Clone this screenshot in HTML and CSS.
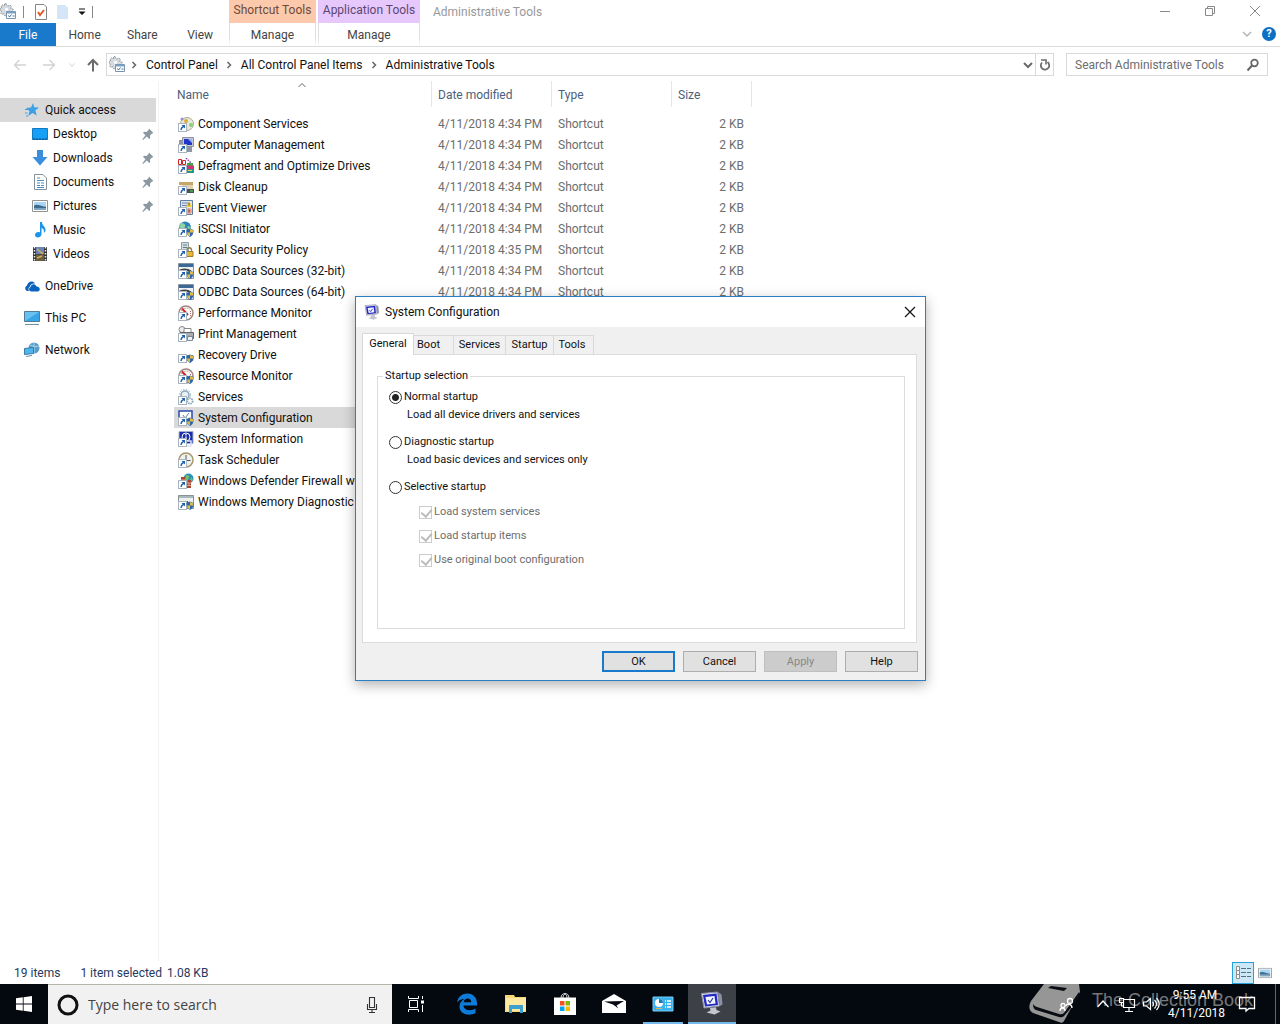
FILE: index.html
```html
<!DOCTYPE html>
<html lang="en">
<head>
<meta charset="utf-8">
<title>Administrative Tools</title>
<link rel="stylesheet" href="styles.css">
</head>
<body>
<svg class="defs" aria-hidden="true">
  <symbol id="link" viewBox="0 0 16 16"><rect x=".5" y="7.500" width="8" height="8" fill="#fff" stroke="#a9b4be"/><path d="M3.500 9H7v3.500l-1.200-1.200Q4 12 3.700 14H2.300Q2.500 11 4.700 10.200z" fill="#1f5fa8"/></symbol>
  <symbol id="shield" viewBox="0 0 16 16"><path d="M12 7.500 15.500 9c0 4-1 5.500-3.500 7-2.500-1.500-3.500-3-3.500-7z" fill="#2d66ae"/><path d="M12 8 15 9.300v2.200H12zM9 11.500h3v4c-2-1-2.700-2.500-3-4z" fill="#e3bd45"/></symbol>
  <symbol id="gear" viewBox="0 0 17 17"><path d="m6 .5.6 2 1.500.6L10 2l1.500 1.500-1 1.800L13 6v2.500H7V13l-2.500-.5-.5-2-2 1L.6 10l1-1.600L0 7.500V5.600l1.800-.5L1 3.200 2.500 2l1.700 1L4.700.5z" fill="#d5dbe0" stroke="#8b979f" stroke-dasharray="2 1"/><circle cx="6.500" cy="6.200" r="1.500" fill="#fff"/><path d="M6.500 8.500h9v7h-9z" fill="#fff" stroke="#7a93aa"/><path d="M6.500 9.500h9" stroke="#7aa2c4" stroke-width="2"/><path d="m8.500 12.500 1 1.500 2-2.500M12.500 13h2" stroke="#356d9c" fill="none"/></symbol>
  <symbol id="pin" viewBox="0 0 12 12"><path d="m7 .5 4.500 4.500-1.500.5-2 2 .2 2.500-1 1-2.400-2.400L1 12 .3 11.500 3.400 7.200 1 4.800l1-1 2.500.2 2-2z" fill="#8c98a1"/></symbol>
  <symbol id="monitor" viewBox="0 0 24 24"><path d="m1.500 2.500 16-1.500 2 14L4 17z" fill="#d9dce8" stroke="#8c91a8"/><path d="m3 4 13.500-1.500 1.500 11.500L5 15.500z" fill="#2328c4"/><path d="m5.500 6 9-1 1 7.500-8.500 1z" fill="#f2f5ff"/><path d="m8 9 2 2.500L13 7" stroke="#273a9a" fill="none" stroke-width="1.200"/><path d="m18 1 3.500 2.500 1 10-2.500 1.500z" fill="#8c91a8"/><path d="m10 17 6-.7.500 2.700 4 1.500-6 3-8-2 4-2z" fill="#c3c6cf"/></symbol>
  <symbol id="picture" viewBox="0 0 16 12"><path d="M.5.5h15v11H.5z" fill="#fff" stroke="#929292"/><path d="M2 2h12v4H2z" fill="#a9d6f5"/><path d="M2 5.500c4-2 6 1 12 1V8H2z" fill="#3c6d91"/><path d="M2 8h12v2H2z" fill="#7fa5c0"/></symbol>
  <symbol id="odbc" viewBox="0 0 16 16"><path d="M.5.500h15v15H.5z" fill="#eef1f4" stroke="#8391a0"/><path d="M1 1h14v3H1z" fill="#3d6795"/><path d="M2 7.500q6-2.500 11 1" fill="none" stroke="#444" stroke-width="2"/></symbol>
  <symbol id="gauge" viewBox="0 0 16 16"><circle cx="8" cy="8" r="7" fill="#fff" stroke="#9b8780" stroke-width="1.500"/><path d="M4 3.500 10 10" stroke="#d32020" stroke-width="2"/><path d="M3.500 6A5.500 5.500 0 0 1 12 4.500M12.500 6v5" fill="none" stroke="#b96565" stroke-dasharray="1 1"/></symbol>
</svg>

<main class="explorer">
  <header class="ribbon">
    <div class="ribbon-left">
      <div class="quick-bar">
        <svg class="i17" aria-hidden="true"><use href="#gear"/></svg>
        <span class="rule"></span>
        <svg class="i14" viewBox="0 0 14 16"><path d="M1.500.5H10l2.500 2.500v12.500h-11z" fill="#fff" stroke="#858585"/><path d="m4 8 2 3 4-5" fill="none" stroke="#e2592a" stroke-width="2"/></svg>
        <svg class="i14 folder" viewBox="0 0 14 16"><path d="M1 1h9v2h2v12H1z" fill="#d5e5f8"/></svg>
        <svg class="i8" viewBox="0 0 8 8"><path d="M1 .5h6v1H1zM.5 3.500h7L4 7z" fill="#111"/></svg>
        <span class="rule"></span>
      </div>
      <nav class="tabs">
        <button class="file">File</button><button>Home</button><button>Share</button><button>View</button>
      </nav>
    </div>
    <div class="context shortcut"><span>Shortcut Tools</span><button>Manage</button></div>
    <div class="context application"><span>Application Tools</span><button>Manage</button></div>
    <h1>Administrative Tools</h1>
    <div class="controls">
      <div class="window-buttons">
        <button aria-label="Minimize"><svg class="i12" viewBox="0 0 12 12"><path d="M1 6.500h10" stroke="#8a8a8a"/></svg></button>
        <button aria-label="Restore"><svg class="i12" viewBox="0 0 12 12"><path d="M1.500 3.500h7v7h-7zM3.500 3.500v-2h7v7h-2" fill="none" stroke="#8a8a8a"/></svg></button>
        <button aria-label="Close"><svg class="i12" viewBox="0 0 12 12"><path d="m1 1 10 10M11 1 1 11" stroke="#8a8a8a"/></svg></button>
      </div>
      <div class="help-row">
        <svg class="i12" viewBox="0 0 12 12"><path d="m2 4 4 4 4-4" fill="none" stroke="#b5b5b5" stroke-width="1.500"/></svg>
        <button class="help" aria-label="Help">?</button>
      </div>
    </div>
  </header>

  <div class="address-row">
    <div class="nav-buttons">
      <button aria-label="Back"><svg class="i14" viewBox="0 0 14 14"><path d="M13 7H1.500m5-5-5 5 5 5" fill="none" stroke="#d2d2d2" stroke-width="1.300"/></svg></button>
      <button aria-label="Forward"><svg class="i14" viewBox="0 0 14 14"><path d="M1 7h11.500m-5-5 5 5-5 5" fill="none" stroke="#d2d2d2" stroke-width="1.300"/></svg></button>
      <button class="recent" aria-label="Recent"><svg class="i8" viewBox="0 0 8 8"><path d="m1.500 2.500 2.500 3 2.500-3" fill="none" stroke="#d2d2d2"/></svg></button>
      <button class="up" aria-label="Up"><svg class="i14" viewBox="0 0 14 14"><path d="M7 13.500V2M2 7l5-5 5 5" fill="none" stroke="#6b6b6b" stroke-width="2"/></svg></button>
    </div>
    <div class="path">
      <svg class="i17"><use href="#gear"/></svg>
      <svg class="i8 crumb first" viewBox="0 0 8 8"><path d="m2.500 1 3 3-3 3" fill="none" stroke="#666" stroke-width="1.500"/></svg>
      <a href="#cp">Control Panel</a>
      <svg class="i8 crumb" viewBox="0 0 8 8"><path d="m2.500 1 3 3-3 3" fill="none" stroke="#666" stroke-width="1.500"/></svg>
      <a href="#all">All Control Panel Items</a>
      <svg class="i8 crumb" viewBox="0 0 8 8"><path d="m2.500 1 3 3-3 3" fill="none" stroke="#666" stroke-width="1.500"/></svg>
      <a href="#admin">Administrative Tools</a>
      <svg class="i12 drop" viewBox="0 0 12 12"><path d="m2 4 4 4 4-4" fill="none" stroke="#6b6b6b" stroke-width="2"/></svg>
      <button class="refresh" aria-label="Refresh"><svg class="i14" viewBox="0 0 14 14"><path d="M9.500 4A4.200 4.200 0 1 1 4 4.500" fill="none" stroke="#6b6b6b" stroke-width="1.800"/><path d="M3 2h5v4.500" fill="none" stroke="#6b6b6b" stroke-width="1.600"/></svg></button>
    </div>
    <div class="search">
      <input type="text" aria-label="Search Administrative Tools" placeholder="Search Administrative Tools">
      <svg class="i14" viewBox="0 0 14 14"><circle cx="8.500" cy="5" r="3.300" fill="none" stroke="#666" stroke-width="1.700"/><path d="m6 7.500-4.500 5" stroke="#666" stroke-width="2"/></svg>
    </div>
  </div>

  <div class="content">
    <nav class="sidebar">
      <a href="#q" class="top selected"><svg class="i16" viewBox="0 0 16 16"><path d="m9 1 1.200 4.300 4.800.2-3.700 3 1.500 5L8.500 11l-4.300 3 1.300-5L2 6l5-.6z" fill="#3ba0e6"/><path d="M1 7.500h3M1 11h2.500M2 14h2" stroke="#3ba0e6"/></svg>Quick access</a>
      <a href="#1"><svg class="i16" viewBox="0 0 16 16"><path d="M.5 2.500h15v11H.5z" fill="#159ff5" stroke="#1379c0"/><path d="M1 13h14" stroke="#0b4f86" stroke-dasharray="2 1"/></svg>Desktop<svg class="pin"><use href="#pin"/></svg></a>
      <a href="#2"><svg class="i16" viewBox="0 0 16 16"><path d="M5 0h6v7h4.500L8 15.500.5 7H5z" fill="#3b8ede"/></svg>Downloads<svg class="pin"><use href="#pin"/></svg></a>
      <a href="#3"><svg class="i16" viewBox="0 0 16 16"><path d="M2.500.5H11L14.500 4v11.500h-12z" fill="#fff" stroke="#87919a"/><path d="M5 4h3M5 6.500h7M5 9h3m1 0h3M5 11.500h3m1 0h3M5 13.500h7" stroke="#4a8fc0"/></svg>Documents<svg class="pin"><use href="#pin"/></svg></a>
      <a href="#4"><svg class="i16" viewBox="0 0 16 12"><use href="#picture"/></svg>Pictures<svg class="pin"><use href="#pin"/></svg></a>
      <a href="#5"><svg class="i16" viewBox="0 0 16 16"><path d="M8 0h2c0 4 4 4 3.500 9l-1.500 2c0-4-.5-4-2.500-5v6.500C9 16 3 16.500 3 13c0-2.500 3-3.500 5-2.500z" fill="#1c95e8"/></svg>Music</a>
      <a href="#6"><svg class="i16" viewBox="0 0 16 16"><path d="M1 1h14v14H1z" fill="#333"/><path d="M4 1h8v7H4z" fill="#6c83b9"/><path d="M4 8.500h8V15H4z" fill="#6b5f44"/><path d="m5 3 6 5M5 12l5-2" stroke="#d7b14a" stroke-width="1.500"/><path d="M2.500 1v14M13.500 1v14" stroke="#eee" stroke-width="1.500" stroke-dasharray="1.500 1.500"/></svg>Videos</a>
      <a href="#7" class="top apart"><svg class="i16" viewBox="0 0 16 16"><path d="M3 13a3 3 0 0 1 0-5.500C3.500 4.500 8 1.500 11 5.500 8 5 6 7 6 8.500 4.500 9 4 11 5 13z" fill="#0a63bd"/><path d="M7 13.500a2.300 2.300 0 0 1-.3-4.500C7 6 11 5 12.500 8.500c3.500-.3 4.500 4.300 1.500 5z" fill="#0a63bd"/></svg>OneDrive</a>
      <a href="#8" class="top apart"><svg class="i16" viewBox="0 0 16 16"><path d="M.5 1.500h15v10H.5z" fill="#67c2f2" stroke="#537c97"/><path d="M1 11 15 2v9z" fill="#38a6e6"/><path d="M1 14.500h14" stroke="#6f8fa5"/></svg>This PC</a>
      <a href="#9" class="top apart"><svg class="i16" viewBox="0 0 16 16"><circle cx="10" cy="6" r="5.500" fill="#5b9cc8"/><path d="M6 3q4 3 9 1M10 1v10" stroke="#a8d5ee" fill="none"/><path d="m.5 6.500 9-1v6l-9 1z" fill="#4bb7ee" stroke="#3c7ba5"/><path d="M2 14.500 8 13.500" stroke="#6f8fa5"/></svg>Network</a>
    </nav>
    <section class="files">
      <table>
        <colgroup><col class="c-name"><col class="c-date"><col class="c-type"><col class="c-size"></colgroup>
        <thead><tr><th class="sorted"><span>Name</span><svg class="i8" viewBox="0 0 8 8"><path d="m.5 6 3.500-3.500L7.500 6" fill="none" stroke="#666"/></svg></th><th><span>Date modified</span></th><th><span>Type</span></th><th><span>Size</span></th></tr></thead>
        <tbody>
          <tr><td><div><svg class="i16" viewBox="0 0 16 16"><circle cx="9" cy="8" r="6.500" fill="#e6e8da" stroke="#a9ab98"/><circle cx="8" cy="5" r="2" fill="#d6b032"/><circle cx="4" cy="3" r="1.500" fill="#9a8fd0"/><circle cx="13" cy="9" r="2" fill="#8ccf7c"/><use href="#link"/></svg>Component Services</div></td><td>4/11/2018 4:34 PM</td><td>Shortcut</td><td>2 KB</td></tr>
          <tr><td><div><svg class="i16" viewBox="0 0 16 16"><path d="M4.500.5h11v9h-11z" fill="#c4c8d2" stroke="#8d93a3"/><path d="M6 2h8v6H6z" fill="#2036c8"/><path d="m10 2 4 4V2z" fill="#9cb4f0"/><path d="M1 3h3v6H1zM9 10h5v5H9z" fill="#8b97a5"/><use href="#link"/></svg>Computer Management</div></td><td>4/11/2018 4:34 PM</td><td>Shortcut</td><td>2 KB</td></tr>
          <tr><td><div><svg class="i16" viewBox="0 0 16 16"><path d="M.5 1.500h3v5h-3zM4.500 2.500h3v4h-3z" fill="#fff" stroke="#d2232a"/><path d="m8 0 5 5" stroke="#843cad" stroke-width="1.500" stroke-dasharray="1.500 1"/><path d="M9 5h6v3H9z" fill="#39a84a"/><path d="M6 7.500h10V11H6z" fill="#d23279"/><path d="M9 11h7v4H9z" fill="#26958a"/><path d="M10 12.500h4" stroke="#f1d04a"/><use href="#link"/></svg>Defragment and Optimize Drives</div></td><td>4/11/2018 4:34 PM</td><td>Shortcut</td><td>2 KB</td></tr>
          <tr><td><div><svg class="i16" viewBox="0 0 16 16"><path d="M1 3h14v3H1z" fill="#c5a767"/><path d="M4 6h11v4H4z" fill="#e0d3b4"/><path d="M7 10h9v4H7z" fill="#4a5250"/><path d="M12 12h3" stroke="#5fd45f"/><use href="#link"/></svg>Disk Cleanup</div></td><td>4/11/2018 4:34 PM</td><td>Shortcut</td><td>2 KB</td></tr>
          <tr><td><div><svg class="i16" viewBox="0 0 16 16"><path d="M2.500.5h12v14h-12z" fill="#dbe4f1" stroke="#647ca8"/><path d="M4 3h8M4 5.500h8" stroke="#6a83b5"/><path d="m11 1 3 6H8z" fill="#f3cf31"/><circle cx="11" cy="11" r="3" fill="#eda18f"/><path d="M11 3v2.500M11 9.500v3" stroke="#643"/><use href="#link"/></svg>Event Viewer</div></td><td>4/11/2018 4:34 PM</td><td>Shortcut</td><td>2 KB</td></tr>
          <tr><td><div><svg class="i16" viewBox="0 0 16 16"><circle cx="7" cy="6.500" r="6" fill="#2c81ba"/><path d="M3 2c3 0 5 1 4 4S3 7 1 6zM9 5l4 1-2 4z" fill="#8ed3a0"/><use href="#link"/><use href="#shield"/></svg>iSCSI Initiator</div></td><td>4/11/2018 4:34 PM</td><td>Shortcut</td><td>2 KB</td></tr>
          <tr><td><div><svg class="i16" viewBox="0 0 16 16"><path d="M3.500.5h7v12h-7z" fill="#d9dfe2" stroke="#8e9ca3"/><path d="M5 3h4M5 5.500h4" stroke="#547d89"/><path d="M9 10V8a2 2 0 0 1 4.500 0v2" fill="none" stroke="#93804a" stroke-width="1.300"/><path d="M7.500 9.500H15v5H7.500z" fill="#e5b838" stroke="#a27c28"/><use href="#link"/></svg>Local Security Policy</div></td><td>4/11/2018 4:35 PM</td><td>Shortcut</td><td>2 KB</td></tr>
          <tr><td><div><svg class="i16" viewBox="0 0 16 16"><use href="#odbc"/><use href="#link"/><use href="#shield"/></svg>ODBC Data Sources (32-bit)</div></td><td>4/11/2018 4:34 PM</td><td>Shortcut</td><td>2 KB</td></tr>
          <tr><td><div><svg class="i16" viewBox="0 0 16 16"><use href="#odbc"/><use href="#link"/><use href="#shield"/></svg>ODBC Data Sources (64-bit)</div></td><td>4/11/2018 4:34 PM</td><td>Shortcut</td><td>2 KB</td></tr>
          <tr><td><div><svg class="i16" viewBox="0 0 16 16"><use href="#gauge"/><use href="#link"/></svg>Performance Monitor</div></td><td>4/11/2018 4:34 PM</td><td>Shortcut</td><td>2 KB</td></tr>
          <tr><td><div><svg class="i16" viewBox="0 0 16 16"><circle cx="4" cy="3.500" r="3" fill="#eee" stroke="#888"/><path d="M6 2.500h7V7H6z" fill="#fff" stroke="#888"/><path d="M2 6.500h13.500v6H2z" fill="#a9adb1" stroke="#62676b"/><path d="M9.500 10.500h5v4h-5z" fill="#edf2f6" stroke="#7b8790"/><use href="#link"/></svg>Print Management</div></td><td>4/11/2018 4:34 PM</td><td>Shortcut</td><td>2 KB</td></tr>
          <tr><td><div><svg class="i16" viewBox="0 0 16 16"><path d="M2 8.500h13v5H2z" fill="#cfd5da" stroke="#8c969d"/><use href="#link"/><use href="#shield"/></svg>Recovery Drive</div></td><td>4/11/2018 4:34 PM</td><td>Shortcut</td><td>2 KB</td></tr>
          <tr><td><div><svg class="i16" viewBox="0 0 16 16"><use href="#gauge"/><use href="#link"/><use href="#shield"/></svg>Resource Monitor</div></td><td>4/11/2018 4:34 PM</td><td>Shortcut</td><td>2 KB</td></tr>
          <tr><td><div><svg class="i16" viewBox="0 0 16 16"><circle cx="7" cy="6" r="4" fill="#e8f0f5" stroke="#86a4b8" stroke-width="1.500"/><circle cx="7" cy="6" r="5.700" fill="none" stroke="#9ab4c4" stroke-dasharray="1.500 1.500"/><circle cx="12" cy="12" r="2.700" fill="#fff" stroke="#86a4b8" stroke-width="1.800" stroke-dasharray="1.500 .8"/><use href="#link"/></svg>Services</div></td><td>4/11/2018 4:34 PM</td><td>Shortcut</td><td>2 KB</td></tr>
          <tr class="chosen"><td><div><svg class="i16" viewBox="0 0 16 16"><path d="M1 1h13v11H1z" fill="#fff" stroke="#2949ab" stroke-width="1.500"/><path d="m5 5 2 3 4-5" fill="none" stroke="#557fb0"/><use href="#link"/><use href="#shield"/></svg>System Configuration</div></td><td></td><td></td><td></td></tr>
          <tr><td><div><svg class="i16" viewBox="0 0 16 16"><path d="M1 .5h14v12H1z" fill="#1c2fa8" stroke="#a6aed0"/><circle cx="8" cy="6" r="4" fill="none" stroke="#fff"/><path d="M8 5.500V10M8 3v1.500M9 10h4v5H9" stroke="#dce2ff" fill="none" stroke-width="1.500"/><use href="#link"/></svg>System Information</div></td><td>4/11/2018 4:34 PM</td><td>Shortcut</td><td>2 KB</td></tr>
          <tr><td><div><svg class="i16" viewBox="0 0 16 16"><circle cx="8" cy="8" r="7" fill="#edf2ed" stroke="#a9956b" stroke-width="1.500"/><path d="M8 3v5.500h4.500" stroke="#555" fill="none"/><use href="#link"/></svg>Task Scheduler</div></td><td>4/11/2018 4:34 PM</td><td>Shortcut</td><td>2 KB</td></tr>
          <tr><td><div><svg class="i16" viewBox="0 0 16 16"><circle cx="10.500" cy="5.500" r="5" fill="#3090bd"/><path d="M8 2q4 0 3 3T7 7zM13 4l2 3-3 2z" fill="#6fc068"/><path d="M3 4h4v3h6v8H3z" fill="#a74632"/><path d="M3 7h4M7 10h6M7 12.500h6M9 7v3M11 10v3" stroke="#dba192"/><use href="#link"/></svg>Windows Defender Firewall with Advanced Security</div></td><td>4/11/2018 4:34 PM</td><td>Shortcut</td><td>2 KB</td></tr>
          <tr><td><div><svg class="i16" viewBox="0 0 16 16"><path d="M.5 1.500h15v13H.5z" fill="#edf0ef" stroke="#89938f"/><path d="M1 2h14v2H1z" fill="#a9b8c0"/><path d="M4 7h6v4H4z" fill="#3d5548"/><use href="#link"/><use href="#shield"/></svg>Windows Memory Diagnostic</div></td><td>4/11/2018 4:34 PM</td><td>Shortcut</td><td>2 KB</td></tr>
        </tbody>
      </table>
    </section>
  </div>

  <footer class="status">
    <span>19 items</span><span>1 item selected</span><span>1.08 KB</span>
    <div class="views">
      <button class="on" aria-label="Details view"><svg class="i17" viewBox="0 0 17 17"><path d="M1.500 2.500h3v4h-3zM1.500 6.500h3v4h-3zM1.500 10.500h3v4h-3z" fill="#fff" stroke="#8c8c8c"/><path d="M6 4.500h5m1 0h4M6 8.500h5m1 0h4M6 12.500h5m1 0h4" stroke="#56707d"/></svg></button>
      <button class="large" aria-label="Icon view"><svg class="i14" viewBox="0 0 16 12"><use href="#picture"/></svg></button>
    </div>
  </footer>
</main>

<section class="dialog" role="dialog" aria-labelledby="dlg">
  <header><svg class="i16"><use href="#monitor"/></svg><h2 id="dlg">System Configuration</h2><button aria-label="Close"><svg class="i12" viewBox="0 0 12 12"><path d="m1 1 10 10M11 1 1 11" stroke="#111" stroke-width="1.200"/></svg></button></header>
  <div class="dialog-body">
    <div class="dialog-tabs"><button class="active">General</button><button class="boot">Boot</button><button class="services">Services</button><button class="startup">Startup</button><button>Tools</button></div>
    <div class="panel">
      <fieldset>
        <legend>Startup selection</legend>
        <label><input type="radio" name="s" checked>Normal startup</label>
        <p>Load all device drivers and services</p>
        <label><input type="radio" name="s">Diagnostic startup</label>
        <p>Load basic devices and services only</p>
        <label><input type="radio" name="s">Selective startup</label>
        <div class="options">
          <label><input type="checkbox" checked disabled>Load system services</label>
          <label><input type="checkbox" checked disabled>Load startup items</label>
          <label><input type="checkbox" checked disabled>Use original boot configuration</label>
        </div>
      </fieldset>
    </div>
    <div class="actions"><button class="default">OK</button><button>Cancel</button><button disabled>Apply</button><button>Help</button></div>
  </div>
</section>

<footer class="taskbar">
  <button class="start" aria-label="Start"><svg class="i16" viewBox="0 0 16 16"><path d="M0 2.300 6.800 1.300v6.300H0zM7.600 1.200 16 0v7.600H7.600zM0 8.400h6.800v6.300L0 13.700zM7.600 8.400H16V16l-8.400-1.200z" fill="#fff"/></svg></button>
  <div class="task-search">
    <svg class="i22" viewBox="0 0 22 22"><circle cx="11" cy="11" r="9" fill="none" stroke="#111" stroke-width="3"/></svg>
    <input type="text" aria-label="Type here to search" placeholder="Type here to search">
    <svg class="i18" viewBox="0 0 18 18"><path d="M6.500 1.500h5v10h-5zM4.500 8v5.500h9V8M9 14v3M6 16.500h6" fill="none" stroke="#333" stroke-width="1.100"/></svg>
  </div>
  <div class="apps">
    <button aria-label="Task view"><svg class="i18" viewBox="0 0 18 18"><path d="M1.500 1v2.500h10V1M2.500 5.500h8v7h-8zM1.500 17v-2.500h10V17M15.500 1v3M15.500 10v7" fill="none" stroke="#fff"/><path d="M14 5.500h3v3h-3z" fill="#fff"/></svg></button>
    <button aria-label="Edge"><svg class="i22" viewBox="0 0 22 22"><path d="M1 9.500C2 3.500 6.500.5 11.500.5c6 0 9.500 4.500 9.500 9.500v2.500H7.500c0 5 7.500 6 12 3V20c-6 3.500-16 1.500-16-6.500C3.500 10 5.500 7.500 8.500 6 5 6 2.500 7.500 1 9.500zM7.600 9.200h7.600c0-5-7-4.700-7.600 0z" fill="#0d7bd8" fill-rule="evenodd"/></svg></button>
    <button aria-label="File Explorer"><svg class="i22" viewBox="0 0 22 22"><path d="M0 2h9l1 2h11v15H0z" fill="#f5d878"/><path d="M1 5h20v13H1z" fill="#ffe9a2"/><path d="M4 20v-8h14v8h-3v-4H7v4z" fill="#3fa0cf"/></svg></button>
    <button aria-label="Store"><svg class="i24" viewBox="0 0 24 24"><path d="M8 6c0-6 8-6 8 0M10 6c0-5 4-5 4 0" fill="none" stroke="#ddd"/><path d="M1 5.500h22V23H1z" fill="#fff"/><path d="M7 9h4.500v4.500H7z" fill="#f25022"/><path d="M12.500 9H17v4.500h-4.500z" fill="#7fba00"/><path d="M7 14.500h4.500V19H7z" fill="#00a4ef"/><path d="M12.500 14.500H17V19h-4.500z" fill="#ffb900"/></svg></button>
    <button aria-label="Mail"><svg class="i24" viewBox="0 0 24 24"><path d="M0 9 12 2l12 7v12H0z" fill="#fff"/><path d="m2 9.500 20-.5-7.500 4.500 2 3-5.500-4z" fill="#06090f"/></svg></button>
    <button class="running" aria-label="Control Panel"><svg class="i22" viewBox="0 0 22 22"><path d="M1 4h20v14H1z" fill="#39b3ef" stroke="#79cdf4"/><circle cx="7" cy="10" r="4" fill="#fff"/><path d="M7 10V6a4 4 0 0 1 4 4z" fill="#2078b8"/><path d="M4 15.500h6" stroke="#e9b448"/><path d="M13 8h1m1 0h4m-6 3h1m1 0h4m-6 3h1m1 0h4" stroke="#fff" stroke-width="1.500"/></svg></button>
    <button class="running current" aria-label="System Configuration"><svg class="i24"><use href="#monitor"/></svg></button>
  </div>
  <div class="tray">
    <svg class="book" viewBox="0 0 52 40"><path d="M15 0H50L51 8 35 37c-1 2-3 2-5 1L4 29c-5-3-4-8-2-12z" fill="#969696"/><path d="M4 20q1 2 4 3l22 7q3 1 5-1L50 8l1 5-16 19q-2 2-5 1L7 26q-3-1-3-6z" fill="#090c12"/><path d="m22 2 16 2-3 3-16-3z" fill="#090c12"/></svg>
    <span class="watermark">The Collection Book</span>
    <svg class="i18" viewBox="0 0 18 18"><path d="M2 16c0-4 5-4 5 0M8 11c1-3 6-2 6 2" fill="none" stroke="#fff" stroke-width="1.300"/><circle cx="5" cy="10.500" r="2" fill="none" stroke="#fff" stroke-width="1.300"/><circle cx="12" cy="6" r="2.500" fill="none" stroke="#fff" stroke-width="1.300"/></svg>
    <svg class="i14 chev" viewBox="0 0 14 14"><path d="m1.500 10 5.500-6 5.500 6" fill="none" stroke="#fff" stroke-width="1.300"/></svg>
    <svg class="i18" viewBox="0 0 18 18"><path d="M5 4.500h11.500v8h-11V8M11 13v3M7 16.500h8M1.500 3.500h4v4h-4zM3.500 8v3h2" fill="none" stroke="#fff" stroke-width="1.200"/></svg>
    <svg class="i18" viewBox="0 0 18 18"><path d="M1.500 7h3l4-3.500v11L4.500 11h-3zM10.500 7q2 2 0 4.500M12.500 5q4 4 0 8.500M14.500 3q5.500 6 0 12" fill="none" stroke="#fff" stroke-width="1.200"/></svg>
    <time>9:55 AM<br>4/11/2018</time>
    <svg class="i18 notice" viewBox="0 0 18 18"><path d="M1.500 2.500h15v11H11L8 16v-2.500H1.500z" fill="none" stroke="#fff" stroke-width="1.300"/></svg>
    <span class="peek"></span>
  </div>
</footer>
</body>
</html>
```

FILE: styles.css
```css
* { box-sizing: border-box; }
body { margin: 0; min-height: 100vh; display: flex; flex-direction: column; background: #fff; color: #111; font: 12px/16px Roboto, "Open Sans", sans-serif; position: relative; overflow-x: hidden; }
button { border: 0; padding: 0; margin: 0; background: none; font: inherit; color: inherit; display: flex; align-items: center; justify-content: center; }
a { color: inherit; text-decoration: none; }
input { font: inherit; margin: 0; }
h1, h2, p { margin: 0; font-size: 12px; font-weight: 400; }
svg { flex: none; display: block; }
.defs { position: absolute; width: 0; height: 0; }
.i8 { width: 8px; height: 8px; }
.i12 { width: 12px; height: 12px; }
.i14 { width: 14px; height: 16px; }
.i16 { width: 16px; height: 16px; }
.i17 { width: 17px; height: 17px; }
.i18 { width: 18px; height: 18px; }
.i22 { width: 22px; height: 22px; }
.i24 { width: 24px; height: 24px; }

.explorer { flex: 1; display: flex; flex-direction: column; }
.ribbon { display: flex; height: 47px; border-bottom: 1px solid #dadbdc; color: #444; }
.ribbon-left { width: 229px; }
.quick-bar { display: flex; align-items: center; height: 23px; gap: 8px; }
.rule { width: 1px; height: 12px; background: #888; margin: 0 -2px; }
.quick-bar .i17 + .rule { margin: 0 2px 0 -2px; }
.tabs { display: flex; height: 23px; }
.tabs button { width: 58px; }
.tabs .file { width: 56px; background: #1979ca; color: #fff; }
.context { display: flex; flex-direction: column; text-align: center; }
.context span { height: 23px; line-height: 21px; }
.context button { height: 23px; border: 1px solid; border-width: 0 1px; border-image: linear-gradient(#dedede 60%, #fff) 1; }
.shortcut { width: 87px; margin-right: 2px; }
.shortcut span { background: #fcc9ac; color: #6d4a3a; }
.application { width: 102px; }
.application span { background: #e6c8fc; color: #5c4770; }
.ribbon h1 { flex: 1; padding: 4px 13px; color: #999; }
.window-buttons { display: flex; height: 22px; }
.window-buttons button { width: 45px; }
.help-row { display: flex; justify-content: flex-end; align-items: center; gap: 9px; height: 24px; padding-right: 4px; }
.controls { width: 138px; }
.help { width: 14px; height: 14px; border-radius: 50%; background: #0b6fc6; color: #fff; font-size: 11px; font-weight: 700; }

.address-row { display: flex; padding: 6px 12px 5px 0; height: 34px; align-items: stretch; }
.nav-buttons { display: flex; width: 106px; padding-left: 5px; }
.nav-buttons button { width: 29px; }
.nav-buttons .recent { width: 18px; }
.nav-buttons .up { width: 24px; }
.path { flex: 1; display: flex; align-items: center; border: 1px solid #d9d9d9; padding-left: 2px; margin-right: 12px; }
.path .crumb { margin: 0 8px 0 7px; }
.path .first { margin-left: 4px; }
.path .drop { margin-left: auto; margin-right: 1px; }
.refresh { width: 18px; align-self: stretch; border-left: 1px solid #d9d9d9; }
.search { width: 202px; display: flex; align-items: center; border: 1px solid #d9d9d9; padding: 0 7px 0 8px; }
.search input { flex: 1; min-width: 0; border: 0; padding: 0; background: none; }
.search input::placeholder { color: #6d6d6d; opacity: 1; }

.content { flex: 1; display: flex; }
.sidebar { width: 159px; padding: 17px 2px 0 0; border-right: 1px solid #f2f2f2; }
.sidebar a { display: flex; align-items: center; gap: 5px; height: 24px; padding-left: 32px; }
.sidebar .top { padding-left: 24px; }
.sidebar .selected { background: #d9d9d9; }
.sidebar .apart { margin-top: 8px; }
.sidebar .pin { width: 12px; height: 12px; margin: 0 2px 0 auto; }
.files { flex: 1; padding-left: 15px; }
table { border-spacing: 0; table-layout: fixed; width: 578px; }
.c-name { width: 258px; }
.c-date, .c-type { width: 120px; }
.c-size { width: 80px; }
th { padding: 0 0 6px; font-weight: 400; text-align: left; color: #4c607a; position: relative; }
th span { display: block; height: 26px; line-height: 28px; padding-left: 6px; border-right: 1px solid #e5e5e5; }
th:first-child span { padding-left: 3px; }
th svg { position: absolute; left: 48%; top: 0; }
td { height: 21px; padding: 0 6px; color: #6d6d6d; white-space: nowrap; }
td:first-child { padding: 0 0 0 4px; color: #111; }
td:last-child { text-align: right; padding-right: 8px; }
td div { display: flex; align-items: center; gap: 4px; overflow: hidden; }
.chosen td { background: #d9d9d9; }
.status { display: flex; align-items: center; height: 23px; padding: 0 8px 0 14px; color: #26385e; }
.status span:nth-child(2) { margin: 0 5px 0 20px; }
.views { display: flex; margin-left: auto; gap: 4px; }
.views button { width: 22px; height: 22px; }
.views .large { width: 14px; }
.views .on { background: #cce8f7; border: 1px solid #26a0da; }

.dialog { position: absolute; left: 355px; top: 296px; width: 571px; background: #f0f0f0; border: 1px solid #2a7ec4; box-shadow: 0 4px 12px rgba(0, 0, 0, .3); font-size: 11px; line-height: 14px; }
.dialog header { display: flex; align-items: center; height: 30px; background: #fff; padding: 0 9px 0 8px; }
.dialog h2 { flex: 1; padding-left: 5px; }
.dialog-body { padding: 7px 8px 8px 6px; }
.dialog-tabs { display: flex; align-items: flex-end; height: 20px; }
.dialog-tabs button { height: 19px; border: 1px solid #d9d9d9; border-left: 0; border-bottom: 0; width: 40px; padding-right: 3px; }
.dialog-tabs .active { height: 22px; width: 52px; background: #fff; border-left: 1px solid #d9d9d9; margin-bottom: -1px; padding: 0 0 2px; }
.dialog-tabs .boot { padding-right: 10px; }
.dialog-tabs .services { width: 52px; padding: 0; }
.dialog-tabs .startup { width: 48px; padding: 0; }
.panel { background: #fff; border: 1px solid #dcdcdc; padding: 13px 11px 13px 14px; }
fieldset { border: 1px solid #dcdcdc; margin: 0; padding: 4px 11px 0; min-width: 0; min-height: 261px; }
legend { padding: 0 2px; margin-left: -6px; line-height: 16px; }
fieldset label { display: flex; align-items: center; gap: 2px; height: 18px; }
fieldset p { font-size: 11px; line-height: 18px; padding-left: 18px; margin-bottom: 9px; }
fieldset input { appearance: none; width: 13px; height: 13px; border: 1px solid #333; background: #fff; }
input[type="radio"] { border-radius: 50%; }
input[type="radio"]:checked { background: radial-gradient(circle, #222 3px, #fff 4px); }
.options { padding: 4px 0 0 30px; color: #6d6d6d; }
.options label { height: 24px; }
.options input { border-color: #ccc; position: relative; }
.options input::after { content: ""; position: absolute; left: 3px; top: 0; width: 5px; height: 8px; border: solid #bbb; border-width: 0 2px 2px 0; transform: rotate(40deg); }
.actions { display: flex; justify-content: flex-end; gap: 8px; padding-top: 8px; margin-right: -1px; }
.actions button { width: 73px; height: 21px; background: #e1e1e1; border: 1px solid #adadad; }
.actions .default { border: 2px solid #1979ca; }
.actions button:disabled { background: #ccc; border-color: #bfbfbf; color: #888; }

.taskbar { display: flex; height: 40px; background: #04080f; color: #fff; }
.start { width: 48px; }
.task-search { width: 344px; display: flex; align-items: center; background: #f1f1f1; border-top: 1px solid #b5b5a8; padding: 0 11px 0 9px; }
.task-search input { flex: 1; min-width: 0; border: 0; background: none; padding: 0 0 0 9px; font: 14px "Open Sans", sans-serif; }
.task-search input::placeholder { color: #444; opacity: 1; }
.apps { display: flex; gap: 1px; }
.apps button { width: 48px; }
.apps button:first-child { margin-right: 2px; }
.running { background: linear-gradient(#76b9ed, #76b9ed) center bottom / 40px 2px no-repeat; }
.apps .current { background: #3d4147; border-bottom: 2px solid #76b9ed; }
.tray { position: relative; display: flex; align-items: center; margin-left: auto; padding-right: 4px; }
.tray > svg, .tray time { position: relative; }
.tray .book { position: absolute; left: -29px; top: 0; width: 52px; height: 40px; }
.watermark { position: absolute; left: 34px; top: 4px; font: 18px/24px "Liberation Sans", sans-serif; color: #777; white-space: nowrap; }
.tray .chev { margin: 0 8px 0 20px; }
.tray .i18 + .i18 { margin-left: 6px; }
.tray time { text-align: center; line-height: 18px; width: 54px; margin: 0 16px 0 8px; }
.peek { width: 1px; height: 40px; background: #666; margin-left: 19px; }
```
